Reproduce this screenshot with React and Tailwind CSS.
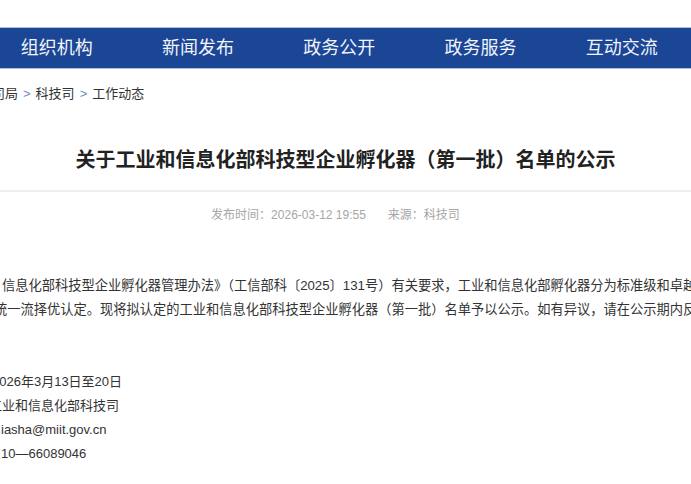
import React from 'react';

const navItems = ['组织机构', '新闻发布', '政务公开', '政务服务', '互动交流'];

const contacts = [
  { text: '2026年3月13日至20日', offset: 'ml-[-8px]' },
  { text: '工业和信息化部科技司', offset: 'ml-[-11px]' },
  { text: 'iasha@miit.gov.cn', offset: 'ml-[1px]' },
  { text: '10—66089046', offset: 'ml-[1px]' },
];

const App = () => {
  return (
    <div className="w-[691px] h-[484px] overflow-hidden bg-white font-['Liberation_Sans','Noto_Sans_CJK_SC',sans-serif] text-[#333]">
      {/* Top nav */}
      <div className="mt-[27px] h-[42px] bg-[#1b4595] border-y border-[#aebfdf] flex items-center">
        <div className="flex ml-[-14px] whitespace-nowrap">
          {navItems.map((item) => (
            <div key={item} className="w-[141.3px] shrink-0 text-center text-[18px] leading-[24px] text-[#f1f4fa]">
              {item}
            </div>
          ))}
        </div>
      </div>

      {/* Breadcrumb */}
      <div className="mt-[15px] h-[20px] flex items-center whitespace-nowrap text-[13px] text-[#333] ml-[-8px]">
        <span>司局</span>
        <span className="px-[5px] text-[#6f8bbd]">&gt;</span>
        <span>科技司</span>
        <span className="px-[5px] text-[#6f8bbd]">&gt;</span>
        <span>工作动态</span>
      </div>

      {/* Title */}
      <h1 className="mt-[42px] text-center text-[20px] leading-[28px] font-bold text-[#222] whitespace-nowrap">
        关于工业和信息化部科技型企业孵化器（第一批）名单的公示
      </h1>

      <div className="mt-[16px] h-[2px] bg-[#eeeeee]" />

      {/* Meta */}
      <div className="mt-[14px] h-[18px] flex justify-center items-center pr-[20px] text-[12px] text-[#a6a6a6] whitespace-nowrap">
        <span>发布时间：2026-03-12 19:55</span>
        <span className="ml-[22px]">来源：科技司</span>
      </div>

      {/* Body */}
      <div className="mt-[50px] text-[13.25px] leading-[24px] text-[#333] whitespace-nowrap">
        <p className="ml-[2px]">
          信息化部科技型企业孵化器管理办法》（工信部科〔2025〕131号）有关要求，工业和信息化部孵化器分为标准级和卓越级
        </p>
        <p className="ml-[-6px]">
          统一流择优认定。现将拟认定的工业和信息化部科技型企业孵化器（第一批）名单予以公示。如有异议，请在公示期内反映。
        </p>
      </div>

      <div className="mt-[48px] text-[13px] leading-[24px] text-[#333] whitespace-nowrap">
        {contacts.map((c) => (
          <p key={c.text} className={c.offset}>{c.text}</p>
        ))}
      </div>
    </div>
  );
};

export default App;
